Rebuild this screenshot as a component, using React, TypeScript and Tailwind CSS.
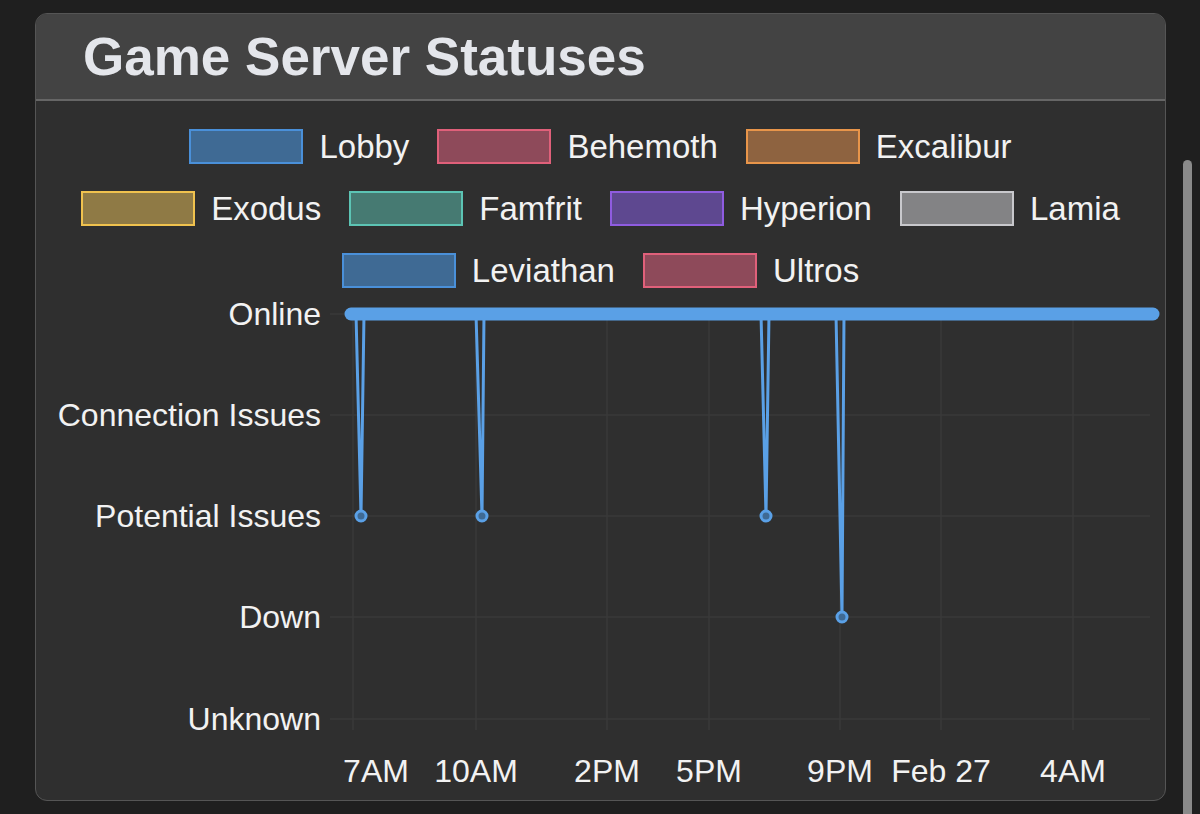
const legend = [
  [
    ['Lobby', '#4a90d9', '#3f6a94'],
    ['Behemoth', '#e0607a', '#8e4a5a'],
    ['Excalibur', '#e8954a', '#8e6340'],
  ],
  [
    ['Exodus', '#f0c24e', '#8f7a45'],
    ['Famfrit', '#5cc4b4', '#467a72'],
    ['Hyperion', '#8f5ce0', '#5e4890'],
    ['Lamia', '#c8c8cc', '#838385'],
  ],
  [
    ['Leviathan', '#4a90d9', '#3f6a94'],
    ['Ultros', '#e0607a', '#8e4a5a'],
  ],
];

const ox = 36;
const oy = 290;
const yLevels = [
  ['Online', 314],
  ['Connection Issues', 415],
  ['Potential Issues', 516],
  ['Down', 617],
  ['Unknown', 719],
] as const;
const vLines = [353, 476, 607, 709, 840, 941, 1073];
const xLabels = [
  ['7AM', 376],
  ['10AM', 476],
  ['2PM', 607],
  ['5PM', 709],
  ['9PM', 840],
  ['Feb 27', 941],
  ['4AM', 1073],
] as const;
const drops = [
  [356, 361, 364, 516],
  [476, 482, 484, 516],
  [761, 766, 769, 516],
  [836, 842, 844, 617],
];

function Chart() {
  const font = '"Liberation Sans", Arial, sans-serif';
  return (
    <svg width={1128} height={510} className="block">
      <g transform={`translate(${-ox},${-oy})`}>
        {yLevels.map(([, y]) => (
          <line key={y} x1={330} x2={1150} y1={y} y2={y} stroke="#3a3a3a" strokeWidth={1.5} />
        ))}
        {vLines.map((x) => (
          <line key={x} x1={x} x2={x} y1={314} y2={730} stroke="#3a3a3a" strokeWidth={1.5} />
        ))}
        {yLevels.map(([t, y]) => (
          <text key={t} x={321} y={y + 11} textAnchor="end" fill="#f2f2f2" fontSize={32} fontFamily={font}>
            {t}
          </text>
        ))}
        {xLabels.map(([t, x]) => (
          <text key={t} x={x} y={782} textAnchor="middle" fill="#f2f2f2" fontSize={32} fontFamily={font}>
            {t}
          </text>
        ))}
        {drops.map(([a, b, c, y]) => (
          <g key={a}>
            <polyline points={`${a},314 ${b},${y} ${c},314`} fill="none" stroke="#5aa0e6" strokeWidth={3} />
            <circle cx={b} cy={y} r={5} fill="#3f6a94" stroke="#5aa0e6" strokeWidth={3} />
          </g>
        ))}
        <line x1={351} x2={1153} y1={314} y2={314} stroke="#5aa0e6" strokeWidth={13} strokeLinecap="round" />
      </g>
    </svg>
  );
}

export default function App() {
  return (
    <div className="w-[1200px] h-[814px] bg-[#1f1f1f] overflow-hidden relative" style={{ fontFamily: '"Liberation Sans", Arial, sans-serif' }}>
      <div className="ml-[35px] mt-[13px] w-[1131px] h-[788px] rounded-[12px] border border-[#555] bg-[#2f2f2f] overflow-hidden flex flex-col">
        <div className="h-[87px] bg-[#434343] border-b-2 border-[#666] flex items-center pl-[47px]">
          <h1 className="text-[53px] font-bold text-[#e4e6eb] leading-none">Game Server Statuses</h1>
        </div>
        <div className="pt-[28px] flex flex-col gap-[27px]">
          {legend.map((row, i) => (
            <div key={i} className="flex justify-center gap-[28px]">
              {row.map(([name, border, fill]) => (
                <div key={name} className="flex items-center gap-[16px]">
                  <div className="w-[114px] h-[35px] border-2" style={{ borderColor: border, background: fill }} />
                  <span className="text-[33px] leading-[35px] text-[#f2f2f2]">{name}</span>
                </div>
              ))}
            </div>
          ))}
        </div>
        <div className="mt-[2px]">
          <Chart />
        </div>
      </div>
      <div className="absolute left-[1183px] top-[160px] w-[9px] h-[680px] rounded-full bg-[#8a8a8a]" />
    </div>
  );
}
